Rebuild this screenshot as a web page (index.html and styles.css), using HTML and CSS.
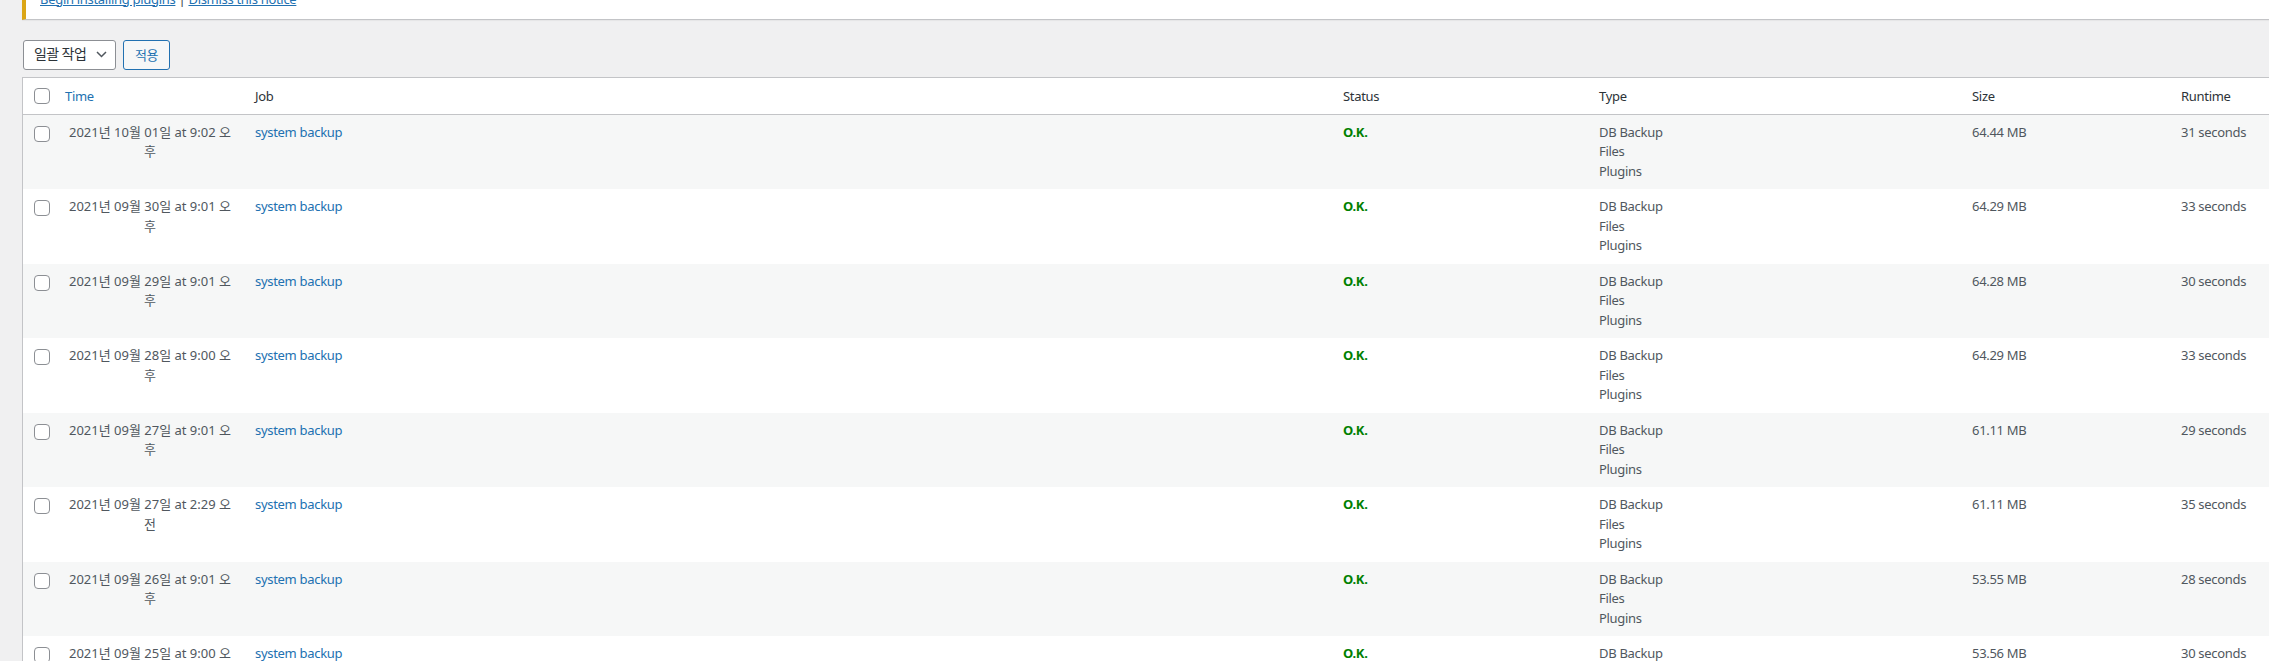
FILE: index.html
```html
<!DOCTYPE html>
<html lang="ko">
<head>
<meta charset="utf-8">
<title>BackWPup Logs</title>
<link rel="stylesheet" href="styles.css">
</head>
<body>
<div class="wrap">
  <div class="notice">
    <p><a href="#">Begin installing plugins</a> | <a href="#">Dismiss this notice</a></p>
  </div>

  <div class="tablenav">
    <div class="bulk-select">
      <span>일괄 작업</span>
      <svg class="chev" width="11" height="7" viewBox="0 0 11 7"><path d="M1 1 L5.5 5.5 L10 1" fill="none" stroke="#50575e" stroke-width="1.5"/></svg>
    </div>
    <button class="apply">적용</button>
  </div>

  <table class="logs">
    <thead>
      <tr>
        <th class="c-check"><input type="checkbox" class="cb"></th>
        <th class="c-time"><a href="#">Time</a></th>
        <th class="c-job">Job</th>
        <th class="c-status">Status</th>
        <th class="c-type">Type</th>
        <th class="c-size">Size</th>
        <th class="c-runtime">Runtime</th>
      </tr>
    </thead>
    <tbody>
      <tr>
        <td class="check"><input type="checkbox" class="cb"></td>
        <td class="time">2021년 10월 01일 at 9:02 오후</td>
        <td><a href="#">system backup</a></td>
        <td><span class="ok">O.K.</span></td>
        <td>DB Backup<br>Files<br>Plugins</td>
        <td>64.44 MB</td>
        <td>31 seconds</td>
      </tr>
      <tr>
        <td class="check"><input type="checkbox" class="cb"></td>
        <td class="time">2021년 09월 30일 at 9:01 오후</td>
        <td><a href="#">system backup</a></td>
        <td><span class="ok">O.K.</span></td>
        <td>DB Backup<br>Files<br>Plugins</td>
        <td>64.29 MB</td>
        <td>33 seconds</td>
      </tr>
      <tr>
        <td class="check"><input type="checkbox" class="cb"></td>
        <td class="time">2021년 09월 29일 at 9:01 오후</td>
        <td><a href="#">system backup</a></td>
        <td><span class="ok">O.K.</span></td>
        <td>DB Backup<br>Files<br>Plugins</td>
        <td>64.28 MB</td>
        <td>30 seconds</td>
      </tr>
      <tr>
        <td class="check"><input type="checkbox" class="cb"></td>
        <td class="time">2021년 09월 28일 at 9:00 오후</td>
        <td><a href="#">system backup</a></td>
        <td><span class="ok">O.K.</span></td>
        <td>DB Backup<br>Files<br>Plugins</td>
        <td>64.29 MB</td>
        <td>33 seconds</td>
      </tr>
      <tr>
        <td class="check"><input type="checkbox" class="cb"></td>
        <td class="time">2021년 09월 27일 at 9:01 오후</td>
        <td><a href="#">system backup</a></td>
        <td><span class="ok">O.K.</span></td>
        <td>DB Backup<br>Files<br>Plugins</td>
        <td>61.11 MB</td>
        <td>29 seconds</td>
      </tr>
      <tr>
        <td class="check"><input type="checkbox" class="cb"></td>
        <td class="time">2021년 09월 27일 at 2:29 오전</td>
        <td><a href="#">system backup</a></td>
        <td><span class="ok">O.K.</span></td>
        <td>DB Backup<br>Files<br>Plugins</td>
        <td>61.11 MB</td>
        <td>35 seconds</td>
      </tr>
      <tr>
        <td class="check"><input type="checkbox" class="cb"></td>
        <td class="time">2021년 09월 26일 at 9:01 오후</td>
        <td><a href="#">system backup</a></td>
        <td><span class="ok">O.K.</span></td>
        <td>DB Backup<br>Files<br>Plugins</td>
        <td>53.55 MB</td>
        <td>28 seconds</td>
      </tr>
      <tr>
        <td class="check"><input type="checkbox" class="cb"></td>
        <td class="time">2021년 09월 25일 at 9:00 오후</td>
        <td><a href="#">system backup</a></td>
        <td><span class="ok">O.K.</span></td>
        <td>DB Backup<br>Files<br>Plugins</td>
        <td>53.56 MB</td>
        <td>30 seconds</td>
      </tr>
    </tbody>
  </table>
</div>
</body>
</html>
```

FILE: styles.css
```css
html, body {
  margin: 0;
  padding: 0;
  overflow: hidden;
  background: #f0f0f1;
}

body {
  font-family: "Noto Sans", "Noto Sans CJK KR", sans-serif;
  font-size: 13px;
  line-height: 1.4em;
  color: #3c434a;
  letter-spacing: -0.3px;
}

a {
  color: #2271b1;
  text-decoration: none;
}

.wrap {
  padding-left: 22px;
  width: 2290px;
}

/* notice */
.notice {
  margin-top: -20px;
  background: #fff;
  border-left: 4px solid #dba617;
  border-bottom: 1px solid #c3c4c7;
  box-shadow: 0 1px 1px rgba(0, 0, 0, 0.04);
  padding: 1px 12px;
}

.notice p {
  margin: 6.5px 0;
  padding: 2px;
  line-height: 19.5px;
  color: #3c434a;
}

.notice a {
  text-decoration: underline;
}

/* tablenav */
.tablenav {
  display: flex;
  align-items: center;
  gap: 7px;
  height: 30px;
  margin: 20px 0 7px 1px;
}

.bulk-select {
  box-sizing: border-box;
  width: 93px;
  height: 30px;
  display: flex;
  align-items: center;
  justify-content: space-between;
  padding: 0 8px 0 10px;
  border: 1px solid #8c8f94;
  border-radius: 3px;
  background: #fff;
  color: #2c3338;
  font-size: 14px;
  letter-spacing: -0.6px;
}

.chev {
  display: block;
}

.apply {
  box-sizing: border-box;
  height: 30px;
  width: 47px;
  padding: 0;
  border: 1px solid #2271b1;
  border-radius: 3px;
  background: #f6f7f7;
  color: #2271b1;
  font-family: "Noto Sans", "Noto Sans CJK KR", sans-serif;
  font-size: 13px;
  letter-spacing: -0.5px;
}

/* table */
.logs {
  table-layout: fixed;
  width: 2290px;
  border-spacing: 0;
  border: 1px solid #c3c4c7;
  background: #fff;
}

.logs th {
  box-sizing: border-box;
  font-weight: 400;
  text-align: left;
  color: #2c3338;
  padding: 9px 10px;
  line-height: 18px;
  border-bottom: 1px solid #c3c4c7;
  vertical-align: middle;
}

.logs th.c-check {
  padding: 0 0 0 11px;
}

.c-check { width: 32px; }
.c-time { width: 190px; }
.c-job { width: 1088px; }
.c-status { width: 256px; }
.c-type { width: 373px; }
.c-size { width: 209px; }
.c-runtime { width: 140px; }

.logs td {
  padding: 8px 10px;
  line-height: 19.5px;
  vertical-align: top;
  color: #50575e;
}

.logs td.check {
  padding: 11px 0 0 11px;
}

.logs td.time {
  padding: 8px 12px;
  text-align: center;
  letter-spacing: 0;
}

.logs tbody tr:nth-child(odd) td {
  background: #f6f7f7;
}

.cb {
  -webkit-appearance: none;
  appearance: none;
  display: block;
  box-sizing: border-box;
  width: 16px;
  height: 16px;
  margin: 0;
  border: 1px solid #8c8f94;
  border-radius: 4px;
  background: #fff;
}

.ok {
  color: #008000;
  font-weight: 700;
}
```
